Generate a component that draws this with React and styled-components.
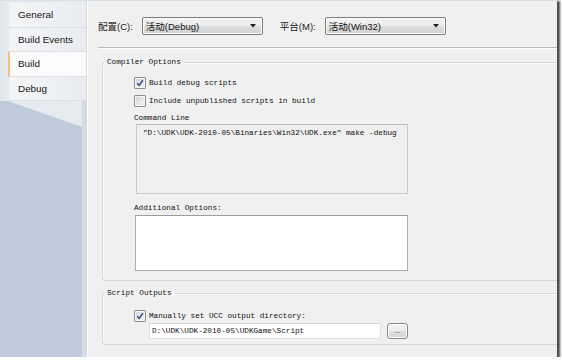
import styled, { createGlobalStyle } from "styled-components";

const GlobalStyle = createGlobalStyle`
  html, body {
    margin: 0;
    padding: 0;
    background: #ffffff;
  }
  body {
    font-family: "Liberation Sans", "Noto Sans CJK SC", sans-serif;
  }
`;

const Window = styled.div`
  width: 557px;
  height: 357px;
  box-sizing: border-box;
  display: flex;
  overflow: hidden;
  background: #f0f0f0;
  border-top: 1px solid #d8dfe9;
  box-shadow: 2px 2px 2px 1px rgba(30, 30, 30, 0.8);
`;

/* left tab strip */
const Sidebar = styled.nav`
  width: 86px;
  flex: none;
  display: flex;
  flex-direction: column;
  background: linear-gradient(to left, #d4dbe5 4px, #bfcbdb 4px);
`;

const TabList = styled.div`
  display: flex;
  flex-direction: column;
  padding: 2px 0 0 8px;
  background: linear-gradient(to right, #e1e6ec, #e9ecf0 8px);
`;

const Tab = styled.div`
  height: 23.5px;
  display: flex;
  align-items: center;
  padding-left: 8px;
  font-size: 9.9px;
  color: #151515;
  border-bottom: 1px solid #dde1e7;
  border-left: 2px solid ${({ $active }) => ($active ? "#f2c27a" : "transparent")};
  background: ${({ $active }) =>
    $active ? "#fbfbfb" : "linear-gradient(to right, #f4f5f7, #e9ecf0)"};
`;

const Wedge = styled.div`
  height: 26px;
  margin: 0 4px 0 8px;
  background: #e6e9ee;
  clip-path: polygon(0 0, 100% 0, 100% 100%);
`;

/* property page */
const Panel = styled.main`
  flex: 1;
  min-width: 0;
  display: flex;
  flex-direction: column;
  border-left: 1px solid #d6d6d6;
  box-shadow: inset 1px 0 #ffffff;
`;

const Header = styled.div`
  display: flex;
  align-items: center;
  gap: 17px;
  padding: 16px 0 0 11px;
`;

const Field = styled.label`
  display: flex;
  align-items: center;
  gap: 9px;
  font-size: 9.5px;
  color: #1a1a1a;
`;

const Combo = styled.div`
  width: 121px;
  height: 18px;
  box-sizing: border-box;
  display: flex;
  align-items: center;
  justify-content: space-between;
  padding: 0 6px 0 3px;
  border: 1px solid #7d7d7d;
  border-radius: 2px;
  background: linear-gradient(#f3f3f3, #ebebeb 50%, #dedede 50%, #d2d2d2);
  box-shadow: inset 0 0 0 1px #fafafa;
  font-size: 9.5px;
  color: #111;
`;

const Separator = styled.div`
  height: 1px;
  margin: 12px 0 0 11px;
  background: #b9b9b9;
  border-bottom: 1px solid #ffffff;
`;

/* group box; its right side runs off the page edge */
const Group = styled.fieldset`
  margin: ${({ $top }) => $top}px 0 0 15px;
  padding: 0;
  border: 1px solid #d3d7da;
  border-right: none;
  border-radius: 3px 0 0 3px;
  box-shadow: inset 1px 1px #fbfbfb;
  font-family: "Liberation Mono", monospace;
  font-size: 7.7px;
  color: #111;
`;

const Legend = styled.legend`
  margin-left: 1px;
  padding: 0 3px;
  line-height: 10px;
`;

const GroupBody = styled.div`
  display: flex;
  flex-direction: column;
  align-items: flex-start;
  padding: ${({ $pad }) => $pad};
`;

const CheckRow = styled.div`
  height: 12px;
  display: flex;
  align-items: center;
  gap: 3px;
  margin-top: ${({ $top }) => $top || 0}px;
  white-space: pre;
`;

const Box = styled.span`
  width: 12px;
  height: 12px;
  box-sizing: border-box;
  flex: none;
  display: flex;
  align-items: center;
  justify-content: center;
  border: 1px solid #8e8f8f;
  border-radius: 1px;
  background: linear-gradient(135deg, #cfd3d8, #f6f6f6);
  box-shadow: inset 0 0 0 1px #f4f4f4;
`;

const FieldLabel = styled.div`
  line-height: 10px;
  margin-top: ${({ $top }) => $top}px;
  white-space: pre;
`;

const TextArea = styled.div`
  width: ${({ $w }) => $w}px;
  height: ${({ $h }) => $h}px;
  box-sizing: border-box;
  margin: ${({ $top }) => $top}px 0 0 ${({ $left }) => $left}px;
  padding: 3px 6px;
  line-height: 10px;
  white-space: pre;
  border: 1px solid ${({ $readOnly }) => ($readOnly ? "#c9cbcd" : "#abadb3")};
  border-top-color: ${({ $readOnly }) => ($readOnly ? "#b9bbbd" : "#9a9ca3")};
  background: ${({ $readOnly }) => ($readOnly ? "#efefef" : "#ffffff")};
`;

const PathRow = styled.div`
  display: flex;
  align-items: center;
  gap: 6px;
  margin-top: 1px;
  padding-left: 15px;
`;

const PathInput = styled.div`
  width: 232px;
  height: 16px;
  box-sizing: border-box;
  display: flex;
  align-items: center;
  padding-left: 2px;
  white-space: pre;
  background: #ffffff;
  border: 1px solid #e2e3e5;
  border-top-color: #d4d5d8;
`;

const BrowseButton = styled.div`
  width: 21px;
  height: 16px;
  box-sizing: border-box;
  display: flex;
  align-items: center;
  justify-content: center;
  border: 1px solid #8a8a8a;
  border-radius: 3px;
  background: linear-gradient(#f4f4f4, #ececec 50%, #dfdfdf 50%, #d5d5d5);
  box-shadow: inset 0 0 0 1px #fbfbfb;
  font-family: "Liberation Sans", sans-serif;
  font-size: 7px;
  color: #333;
  padding-bottom: 2px;
`;

const Arrow = () => (
  <svg width="6" height="4" viewBox="0 0 6 4">
    <polygon points="0,0 6,0 3,3.5" fill="#1e1e1e" />
  </svg>
);

const CheckBox = ({ checked }) => (
  <Box>
    {checked && (
      <svg width="8" height="8" viewBox="0 0 8 8">
        <path d="M1.2 4.2 L3.2 6.4 L6.9 1.2" fill="none" stroke="#3b4d80" strokeWidth="1.5" />
      </svg>
    )}
  </Box>
);

const COMMAND = "\"D:\\UDK\\UDK-2010-05\\Binaries\\Win32\\UDK.exe\" make -debug";
const OUTPUT_DIR = "D:\\UDK\\UDK-2010-05\\UDKGame\\Script";

const tabs = ["General", "Build Events", "Build", "Debug"];

const App = () => {
  return (
    <>
      <GlobalStyle />
      <Window>
        <Sidebar>
          <TabList>
            {tabs.map((t) => (
              <Tab key={t} $active={t === "Build"}>
                {t}
              </Tab>
            ))}
          </TabList>
          <Wedge />
        </Sidebar>

        <Panel>
          <Header>
            <Field>
              配置(C):
              <Combo>
                活动(Debug)
                <Arrow />
              </Combo>
            </Field>
            <Field>
              平台(M):
              <Combo>
                活动(Win32)
                <Arrow />
              </Combo>
            </Field>
          </Header>
          <Separator />

          <Group $top={8}>
            <Legend>Compiler Options</Legend>
            <GroupBody $pad="10px 0 9px 31px">
              <CheckRow>
                <CheckBox checked />
                Build debug scripts
              </CheckRow>
              <CheckRow $top={6}>
                <CheckBox />
                Include unpublished scripts in build
              </CheckRow>
              <FieldLabel $top={6}>Command Line</FieldLabel>
              <TextArea $readOnly $w={272} $h={70} $top={1} $left={2}>
                {COMMAND}
              </TextArea>
              <FieldLabel $top={9}>Additional Options:</FieldLabel>
              <TextArea $w={273} $h={56} $top={2} $left={1} />
            </GroupBody>
          </Group>

          <Group $top={7}>
            <Legend>Script Outputs</Legend>
            <GroupBody $pad="12px 0 5px 31px">
              <CheckRow>
                <CheckBox checked />
                Manually set UCC output directory:
              </CheckRow>
              <PathRow>
                <PathInput>{OUTPUT_DIR}</PathInput>
                <BrowseButton>...</BrowseButton>
              </PathRow>
            </GroupBody>
          </Group>
        </Panel>
      </Window>
    </>
  );
};

export default App;
